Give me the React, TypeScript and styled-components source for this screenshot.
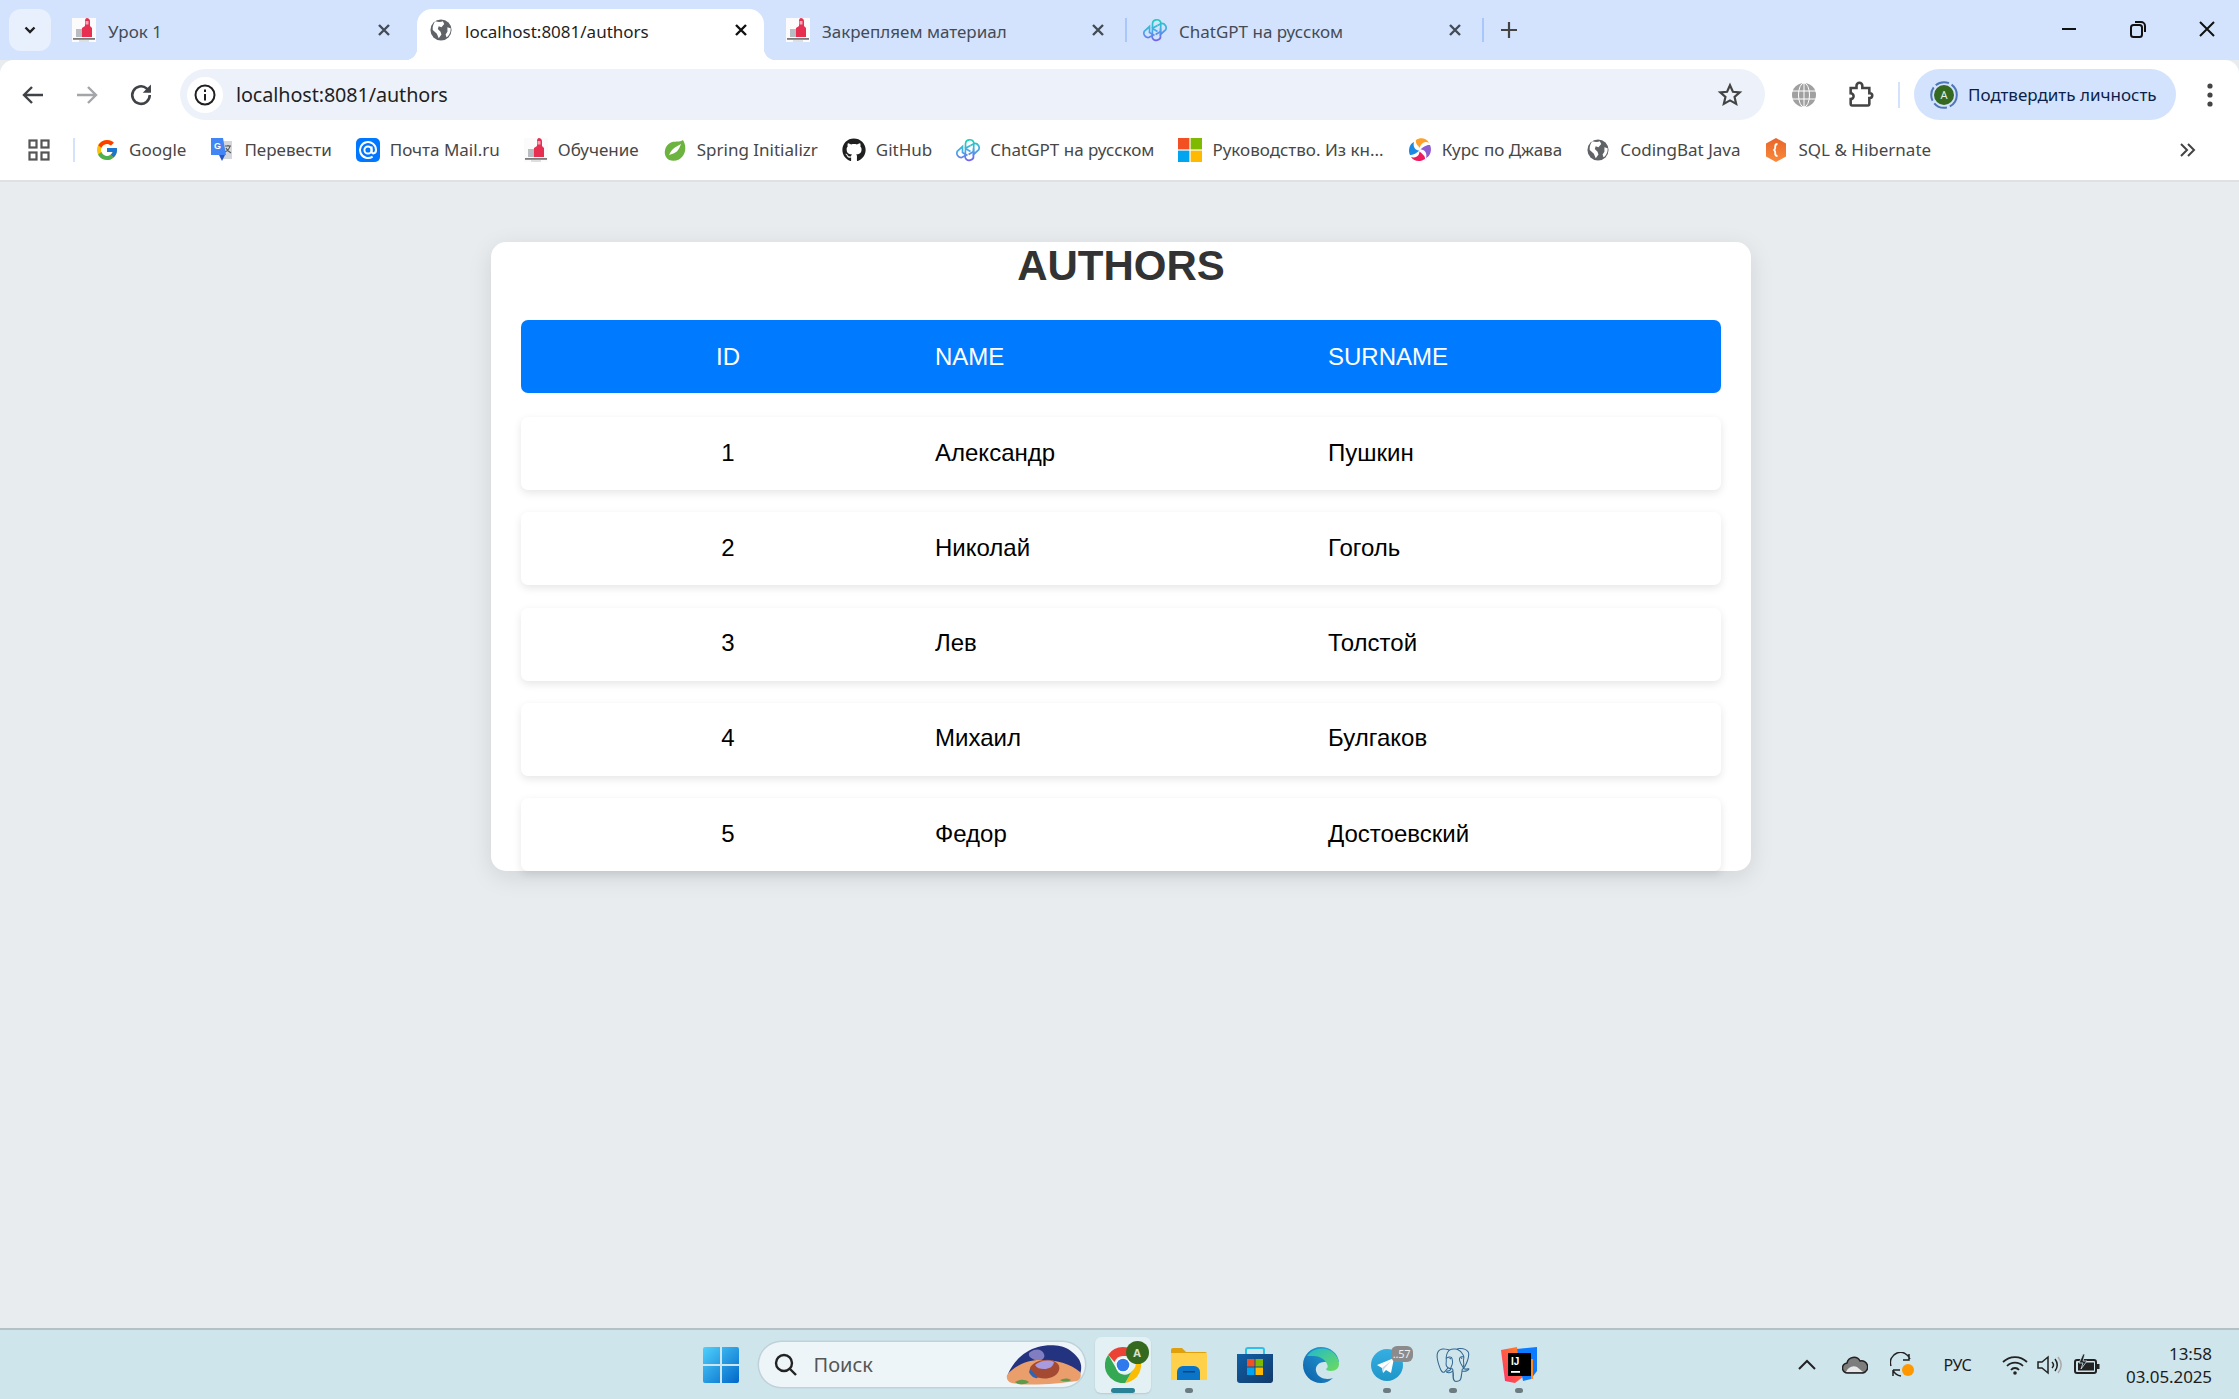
import React from "react";
import styled, { createGlobalStyle, css } from "styled-components";
import { FcGoogle } from "react-icons/fc";
import { FaGithub } from "react-icons/fa";
import { SiPostgresql } from "react-icons/si";

const Global = createGlobalStyle`
  html, body { margin: 0; padding: 0; height: 100%; overflow: hidden; }
  body { font-family: "Noto Sans", "Open Sans", sans-serif; background: #e8ecef; }
  #root { height: 100%; }
`;

const UI = `"Noto Sans", "Open Sans", sans-serif`;
const PAGE = `"Liberation Sans", Arial, sans-serif`;

const Screen = styled.div`
  width: 2239px; height: 1399px; display: flex; flex-direction: column; background: #e8ecef; overflow: hidden;
`;

/* ---------- tab strip ---------- */
const TabStrip = styled.div`
  height: 60px; flex: none; background: #d3e3fd; display: flex; align-items: flex-end; padding-left: 9px;
`;
const TabMenu = styled.div`
  width: 42px; height: 42px; margin: 0 9px 9px 0; border-radius: 12px; background: #e9f0fd;
  display: flex; align-items: center; justify-content: center; color: #1f1f1f; flex: none;
`;
const Tab = styled.div<{ $active?: boolean }>`
  position: relative; width: 347px; height: 51px; margin-right: 10px; flex: none;
  display: flex; align-items: center; padding: 0 11px 9px 12px; box-sizing: border-box; gap: 12px;
  color: ${(p) => (p.$active ? "#1f1f1f" : "#444b55")};
  ${(p) =>
    p.$active &&
    css`
      background: #fff; border-radius: 15px 15px 0 0; padding-left: 13px; gap: 13px;
      &::before, &::after { content: ""; position: absolute; bottom: 0; width: 12px; height: 12px; }
      &::before { left: -12px; background: radial-gradient(circle at 0 0, transparent 12px, #fff 12.5px); }
      &::after { right: -12px; background: radial-gradient(circle at 100% 0, transparent 12px, #fff 12.5px); }
    `}
`;
const TabTitle = styled.span`
  flex: 1; font: 400 17px/24px ${UI}; white-space: nowrap; overflow: hidden; padding-top: 4px;
`;
const TabDivider = styled.i`
  position: absolute; right: -6px; top: 9px; width: 2px; height: 24px; background: #a8c7fa;
`;
const NewTab = styled.div`
  margin: 0 0 12px 9px; height: 36px; display: flex; align-items: center; color: #444;
`;
const WindowButtons = styled.div`
  margin-left: auto; margin-right: -2px; display: flex; align-self: flex-start; height: 60px; align-items: center; padding-bottom: 2px; box-sizing: border-box;
`;
const WinBtn = styled.div`
  width: 69px; display: flex; justify-content: center; color: #111;
`;

/* ---------- toolbar ---------- */
const Toolbar = styled.div`
  height: 60px; flex: none; background: #fff; border-radius: 14px 14px 0 0; display: flex; align-items: center;
  padding-top: 9px; box-sizing: border-box;
`;
const NavButtons = styled.div`
  width: 180px; flex: none; display: flex; padding-left: 13px; box-sizing: border-box;
`;
const NavBtn = styled.div<{ $off?: boolean }>`
  width: 54px; height: 40px; display: flex; align-items: center; justify-content: flex-start;
  color: ${(p) => (p.$off ? "#a3a5a8" : "#3f4246")}; padding-left: 6px; box-sizing: border-box;
`;
const Omnibox = styled.div`
  width: 1585px; height: 51px; flex: none; background: #edf2fa; border-radius: 26px; display: flex; align-items: center;
  padding: 0 22px 0 7px; box-sizing: border-box;
`;
const InfoChip = styled.div`
  width: 36px; height: 36px; border-radius: 50%; background: #fff; display: flex; align-items: center; justify-content: center; flex: none;
`;
const Url = styled.div`
  margin-left: 13px; flex: 1; font: 400 19.8px/24px ${UI}; color: #1f1f1f; letter-spacing: -0.1px;
`;
const ToolIcon = styled.div<{ $w: number }>`
  width: ${(p) => p.$w}px; display: flex; justify-content: center; flex: none; color: #444;
`;
const ToolDivider = styled.i`
  width: 2px; height: 26px; background: #d3e3fd; flex: none; margin-left: 21px;
`;
const ProfilePill = styled.div`
  width: 262px; height: 51px; border-radius: 26px; background: #d3e3fd; flex: none; margin-left: 14px;
  display: flex; align-items: center; padding-left: 16px; box-sizing: border-box; gap: 10px;
  font: 400 17px/24px ${UI}; color: #0b1f4b; white-space: nowrap;
`;
const Avatar = styled.svg`
  flex: none;
`;
const MoreBtn = styled.div`
  width: 63px; flex: none; display: flex; justify-content: center; padding-left: 4px; box-sizing: border-box; color: #444;
`;

/* ---------- bookmarks ---------- */
const BookmarkBar = styled.div`
  height: 62px; flex: none; background: #fff; border-bottom: 2px solid #dfe1e3; box-sizing: border-box;
  display: flex; align-items: center;
`;
const AppsBtn = styled.div`
  width: 73px; flex: none; display: flex; justify-content: center; padding-left: 5px; box-sizing: border-box;
`;
const BookmarkDivider = styled.i`
  width: 2px; height: 24px; background: #d3e3fd; flex: none; margin-right: 20px;
`;
const Bookmark = styled.div`
  display: flex; align-items: center; gap: 10px; margin-right: 24px; flex: none;
  font: 400 17px/24px ${UI}; color: #474747; white-space: nowrap;
`;
const Overflow = styled.div`
  margin-left: auto; margin-right: 42px; color: #444; display: flex;
`;
const BmIcon = styled.span`
  width: 24px; height: 24px; display: flex; align-items: center; justify-content: center; flex: none; font-size: 24px;
`;

/* ---------- page ---------- */
const Main = styled.main`
  flex: 1; min-height: 0; display: flex; justify-content: center; align-items: flex-start; padding: 60px 0 0 3px; box-sizing: border-box;
  background: #e8ecef;
`;
const Card = styled.section`
  width: 1260px; height: 629px; box-sizing: border-box; background: #fff; border-radius: 15px; padding: 0 30px;
  box-shadow: 0 6px 24px rgba(0, 0, 0, 0.1); font-family: ${PAGE};
`;
const Title = styled.h1`
  margin: 0 0 30px; font: 700 42px/48px ${PAGE}; color: #333; text-align: center;
`;
const Cols = css`
  display: grid; grid-template-columns: 414px 393px 393px; align-items: center; font-size: 24px;
`;
const HeaderRow = styled.div`
  ${Cols}; height: 73px; background: #007bff; border-radius: 7px; color: #fff; margin-bottom: 24px;
`;
const Rows = styled.div`
  display: flex; flex-direction: column; gap: 22.25px;
`;
const Row = styled.div`
  ${Cols}; height: 73px; box-sizing: border-box; padding-bottom: 2px; background: #fff; border-radius: 7px; color: #000;
  box-shadow: 0 3px 9px rgba(0, 0, 0, 0.1);
`;
const IdCell = styled.div`
  text-align: center;
`;
const Cell = styled.div``;

/* ---------- taskbar ---------- */
const Taskbar = styled.footer`
  height: 71px; flex: none; box-sizing: border-box; background: #cfe5ec; border-top: 2px solid #b5c0c5;
  display: grid; grid-template-columns: 1fr auto 1fr; align-items: center;
`;
const TaskCenter = styled.div`
  grid-column: 2; display: flex; align-items: center; gap: 10px;
`;
const TaskTile = styled.div<{ $active?: boolean }>`
  position: relative; width: 56px; height: 56px; border-radius: 6px; display: flex; align-items: center; justify-content: center; flex: none;
  ${(p) => p.$active && css`background: #e3f0f4; box-shadow: 0 1px 2px rgba(0,0,0,.12);`}
`;
const Indicator = styled.i<{ $active?: boolean }>`
  position: absolute; bottom: 0; left: 50%; transform: translateX(-50%); height: 5px; border-radius: 3px;
  width: ${(p) => (p.$active ? 24 : 8)}px; background: ${(p) => (p.$active ? "#2a8296" : "#6c7b80")};
`;
const SearchBox = styled.div`
  width: 326px; height: 45px; border-radius: 23px; box-sizing: border-box; background: #eef5f8;
  box-shadow: 0 0 0 1.5px #bfd2d9; display: flex; align-items: center; padding-left: 15px; gap: 16px; flex: none;
  font: 400 20px/24px ${UI}; color: #555;
`;
const SearchArt = styled.div`
  margin-left: auto; margin-right: 3px; display: flex;
`;
const TileBadge = styled.span`
  position: absolute; left: 31px; top: 4px; width: 23px; height: 23px; border-radius: 50%; background: #35691f;
  color: #d6e4cd; font: 700 11px/23px ${UI}; text-align: center;
`;
const CountBadge = styled.span`
  position: absolute; left: 32px; top: 9px; width: 22px; height: 16px; border-radius: 6px; background: #8b8b8b;
  color: #eee; font: 400 11px/16px ${UI}; text-align: center; letter-spacing: -0.3px;
`;
const Tray = styled.div`
  grid-column: 3; justify-self: stretch; display: flex; align-items: center; height: 100%;
  color: #1c1c1c; padding-left: 245px;
`;
const TrayIcon = styled.span<{ $w: number }>`
  width: ${(p) => p.$w}px; flex: none; display: flex; justify-content: center;
`;
const Lang = styled.span`
  width: 30px; flex: none; font: 400 16px/20px ${UI}; letter-spacing: -0.3px; margin: 0 27px 0 -2px; text-align: center;
`;
const Clock = styled.div`
  margin-left: auto; margin-right: 27px; text-align: right; font: 400 17px/23px ${UI}; letter-spacing: -0.1px; color: #1c1c1c;
`;

/* ---------- drawings ---------- */
const Close = ({ c = "#444b55" }: { c?: string }) => (
  <svg width="24" height="24" viewBox="0 0 24 24"><path d="M7 7l10 10M17 7L7 17" stroke={c} strokeWidth="2.4" /></svg>
);
const SchoolIcon = ({ s = 24 }: { s?: number }) => (
  <svg width={s} height={s} viewBox="0 0 24 24">
    <rect width="24" height="24" fill="#fbfbfb" />
    <rect x="4" y="11" width="9" height="8" fill="#b9bcc0" />
    <path d="M10 19V10l3-2V3c0-2 1-3 2-3s3 1 3 3v5l2 2v9z" fill="#e72f52" />
    <path d="M13.500 3h3v3.500h-3z" fill="#f7a6b6" />
    <rect x="1" y="20" width="22" height="1.800" fill="#7a7a7a" />
    <rect x="7" y="22.500" width="10" height="1" fill="#c4c4c4" />
  </svg>
);
const Globe = ({ s = 22, c = "#5f6368" }: { s?: number; c?: string }) => (
  <svg width={s} height={s} viewBox="0 0 24 24">
    <circle cx="12" cy="12" r="11.500" fill={c} />
    <path d="M6 2.500c3 1 6 1 8 0l1.500 3-3 3.500-3-1-1 3 3 3 1 3-3 4-2-5-4.500-4C2.500 8 4 4.500 6 2.500zM19 9l3.500 1c.4 4-1.500 8-4.500 10l-1-3 2-3z" fill="#fff" />
  </svg>
);
const GptIcon = () => (
  <svg width="24" height="25" viewBox="0 0 24 24" fill="none">
    <defs>
      <linearGradient id="gptg" gradientUnits="userSpaceOnUse" x1="10" y1="0" x2="13" y2="24">
        <stop offset="0" stopColor="#14d8b0" />
        <stop offset=".5" stopColor="#4aa8e8" />
        <stop offset="1" stopColor="#7a55ee" />
      </linearGradient>
    </defs>
    <g stroke="url(#gptg)" strokeWidth="1.700">
      <path d="M9.500 9.800V5.500a4.300 4.300 0 018.300-1.500l-.2 9-5 3M9.500 9.800l5-2.800" />
      <path d="M14.500 7l3.800-2a4.300 4.300 0 014.200 6.500L17.500 16v-6" />
      <path d="M17.500 13v4a4.300 4.300 0 01-8.300 2l.3-9 5 3" />
      <path d="M9.500 17l-3.800 2a4.300 4.300 0 01-4.200-6.500L6.500 8v6l5 3" />
    </g>
  </svg>
);
const Chevron = () => (
  <svg width="18" height="18" viewBox="0 0 18 18"><path d="M4.500 6.500L9 11l4.500-4.500" stroke="#1f1f1f" strokeWidth="2.400" fill="none" /></svg>
);
const TranslateIcon = () => (
  <svg width="24" height="26" viewBox="0 0 24 26">
    <path d="M11 4h11v18H13z" fill="#d3d6da" />
    <path d="M15 9h6M18 8v1M20 9c-.7 3-3 5-5 6M16 11c.8 2 3 4 5 5" stroke="#555" strokeWidth="1.100" fill="none" />
    <path d="M1 1h12l3 17H1z" fill="#4285f4" />
    <path d="M9 18l3 6 3-6z" fill="#2a56c6" />
    <text x="4" y="12" fontSize="9" fontWeight="700" fontFamily="Liberation Sans" fill="#fff">G</text>
  </svg>
);
const MailIcon = () => (
  <svg width="24" height="24" viewBox="0 0 24 24">
    <rect width="24" height="24" rx="5" fill="#0077ff" />
    <circle cx="12" cy="12" r="3.600" fill="none" stroke="#fff" strokeWidth="2" />
    <path d="M15.600 8.400v5c0 3 4.400 2.600 4.400-1.400a8 8 0 10-3.400 6.600" fill="none" stroke="#fff" strokeWidth="2" />
  </svg>
);
const SpringIcon = () => (
  <svg width="24" height="24" viewBox="0 0 24 24">
    <path d="M20 2c.5 1 1 2 1.400 3 2.600 7-.6 14-5.400 16.500C11 24 5.500 23 3 19 .5 14.500 2 8 7 5c4-2.400 10-.5 13-3z" fill="#6db33f" />
    <path d="M6 17c3-7 7-8 12-11-2 6-5 9-9 10-1 .3-2 .6-3 1z" fill="#fff" />
  </svg>
);
const MsIcon = () => (
  <svg width="24" height="24" viewBox="0 0 24 24">
    <rect width="11.400" height="11.400" fill="#f25022" />
    <rect x="12.600" width="11.400" height="11.400" fill="#7fba00" />
    <rect y="12.600" width="11.400" height="11.400" fill="#00a4ef" />
    <rect x="12.600" y="12.600" width="11.400" height="11.400" fill="#ffb900" />
  </svg>
);
const CourseIcon = () => (
  <svg width="24" height="24" viewBox="0 0 24 24">
    <path d="M8 2c4-3 11-2 13 3-3-2-6-1-8 2-1 1-1 2-1 3-2-2-5-5-4-8z" fill="#ffa02b" />
    <path d="M22 7c2 4 1 11-4 13 1-3 0-7-3-8-1-.5-1.500-.5-2.500-.5 2-2 6-5 9.500-4.500z" fill="#8e5bd0" />
    <path d="M17 21c-4 3-11 3-14-2 3 1 7 0 8-3l.6-2.500c2 2 6 4.500 5.400 7.500z" fill="#ee1c5f" />
    <path d="M2 17C0 13 1 6 6 4c-1 3 0 7 3 8 .8.400 1.500.5 2.500.5C9 14.500 5.500 17.500 2 17z" fill="#1e88e5" />
  </svg>
);
const SqlIcon = () => (
  <svg width="24" height="24" viewBox="0 0 24 24">
    <defs><linearGradient id="sqlg" x1="0" y1="0" x2="0" y2="1"><stop offset="0" stopColor="#e8652a" /><stop offset="1" stopColor="#f98a3c" /></linearGradient></defs>
    <path d="M12 0l10 5.500v13L12 24 2 18.500v-13z" fill="url(#sqlg)" />
    <path d="M13.500 6c-2 0-2.300 1-2.300 2.500v1.500c0 1-.5 1.700-1.700 2 1.200.3 1.700 1 1.700 2v1.500c0 1.500.3 2.500 2.300 2.500" fill="none" stroke="#fff" strokeWidth="1.800" />
  </svg>
);
const WinLogo = () => (
  <svg width="36" height="36" viewBox="0 0 36 36">
    <defs>
      <linearGradient id="wing" x1="0" y1="0" x2="1" y2="1"><stop offset="0" stopColor="#4fd0fc" /><stop offset="1" stopColor="#0067c9" /></linearGradient>
    </defs>
    <path d="M0 2a2 2 0 012-2h15v17H0zM19 0h15a2 2 0 012 2v15H19zM0 19h17v17H2a2 2 0 01-2-2zM19 19h17v15a2 2 0 01-2 2H19z" fill="url(#wing)" />
  </svg>
);
const SearchArtwork = () => (
  <svg width="76" height="42" viewBox="0 0 76 42">
    <path d="M2 30C8 16 20 6 32 3c10-3 24-2 30 2 6 4 12 9 13 16s-2 13-6 14H6z" fill="#24337f" />
    <path d="M24 8c6-4 12-3 14 2s-4 8-9 6-8-5-5-8z" fill="#8b86c9" opacity=".9" />
    <path d="M1 31c8-10 22-16 36-15 14 0 28 4 37 12 2 4 0 8-3 9-20 3-50 5-65 2-4-1-6-4-5-8z" fill="#ea9e6c" />
    <path d="M24 24c3-8 22-12 28-4 4 5-1 13-9 14-8 2-21-2-19-10z" fill="#a54a32" />
    <path d="M29 21c4-4 13-6 19-3-1 5-5 7-10 7-4 0-7-1-9-4z" fill="#a99be0" />
    <path d="M24 25c3 2 5 6 8 9-4 1-8-3-9-6z" fill="#2f64b5" />
    <path d="M9 38c5-3 10-3 14 0-4 3-10 3-14 0zM54 36c4-2 8-2 11 0-3 2-8 2-11 0z" fill="#5f9a48" />
  </svg>
);
const ChromeIcon = () => (
  <svg width="36" height="36" viewBox="0 0 36 36">
    <path d="M18 0a18 18 0 0115.600 9H18a9 9 0 00-8.500 6L3.200 7.700A18 18 0 0118 0z" fill="#ea4335" />
    <path d="M33.600 9a18 18 0 01-13.500 27L27 24a9 9 0 00-.5-15z" fill="#fbbc04" />
    <path d="M20.100 36A18 18 0 013.200 7.700L11 21a9 9 0 0016 3z" fill="#34a853" />
    <circle cx="18" cy="18" r="7.500" fill="#fff" />
    <circle cx="18" cy="18" r="6.300" fill="#2f7bee" />
  </svg>
);
const FolderIcon = () => (
  <svg width="36" height="35" viewBox="0 0 36 35">
    <path d="M0 3a2 2 0 012-2h9l4 4h19a2 2 0 012 2v3H0z" fill="#e0a00c" />
    <path d="M0 6h36v27H0z" fill="#ffd04a" />
    <path d="M6 25a6 6 0 016-6h11a6 6 0 016 6v8H6z" fill="#0a74c8" />
    <rect x="12" y="24" width="12" height="1.500" fill="#07457e" />
  </svg>
);
const StoreIcon = () => (
  <svg width="36" height="36" viewBox="0 0 36 36">
    <defs><linearGradient id="stg" x1="0" y1="0" x2="1" y2="1"><stop offset="0" stopColor="#0f5fa6" /><stop offset="1" stopColor="#133a6a" /></linearGradient></defs>
    <path d="M9 8V3a2 2 0 012-2h14a2 2 0 012 2v5" fill="none" stroke="#2cc0ec" strokeWidth="2" />
    <path d="M0 7h36v26a3 3 0 01-3 3H3a3 3 0 01-3-3z" fill="url(#stg)" />
    <rect x="10" y="12" width="7.500" height="7.500" fill="#f25022" />
    <rect x="18.500" y="12" width="7.500" height="7.500" fill="#7fba00" />
    <rect x="10" y="20.500" width="7.500" height="7.500" fill="#00a4ef" />
    <rect x="18.500" y="20.500" width="7.500" height="7.500" fill="#ffb900" />
  </svg>
);
const EdgeIcon = () => (
  <svg width="36" height="36" viewBox="0 0 36 36">
    <defs>
      <linearGradient id="edg1" x1="0" y1="1" x2="1" y2="0"><stop offset="0" stopColor="#0a5ea8" /><stop offset="1" stopColor="#2ba8dc" /></linearGradient>
      <linearGradient id="edg2" x1="0" y1="0" x2="1" y2="1"><stop offset="0" stopColor="#1fb8cf" /><stop offset="1" stopColor="#6fdc5a" /></linearGradient>
    </defs>
    <path d="M18 0C8 0 0 8 0 18c0 10 8 18 18 18 5 0 9-2 12-5-6 2-15 1-17-7-1-5 3-9 8-9h15C35 6 27 0 18 0z" fill="url(#edg1)" />
    <path d="M4 9C8 3 16 0 23 2c8 2 13 9 13 15 0 4-3 7-8 7-3 0-5-1-5-2 2-1 2-3 1-5-2-5-8-8-13-8-3 0-6 0-7 0z" fill="url(#edg2)" />
  </svg>
);
const TelegramIcon = () => (
  <svg width="32" height="32" viewBox="0 0 32 32">
    <defs><linearGradient id="tgg" x1="0.5" y1="0" x2="0.5" y2="1"><stop offset="0" stopColor="#37aee2" /><stop offset="1" stopColor="#1e96c8" /></linearGradient></defs>
    <circle cx="16" cy="16" r="16" fill="url(#tgg)" />
    <path d="M6 16l17-7-3 15-5-3-3 3-1-5z" fill="#fff" />
    <path d="M11 19l9-7-7 8-.5 3z" fill="#c8daea" />
  </svg>
);
const IdeaIcon = () => (
  <svg width="36" height="36" viewBox="0 0 36 36">
    <defs>
      <linearGradient id="ijg" x1="0" y1="1" x2="1" y2="0"><stop offset="0" stopColor="#ff2d6b" /><stop offset="1" stopColor="#ff8a1f" /></linearGradient>
    </defs>
    <path d="M0 3l16-3 6 30-8 6-10-2z" fill="url(#ijg)" />
    <path d="M16 2L36 0v24l-6 8-8 2z" fill="#0d7bff" />
    <rect x="30" y="12" width="2" height="20" fill="#ff8a1f" />
    <rect x="7" y="6" width="23" height="23" fill="#000" />
    <text x="10" y="18" fontFamily="Liberation Sans" fontSize="10" fontWeight="700" fill="#fff">IJ</text>
    <rect x="10" y="24" width="9" height="1.800" fill="#fff" />
  </svg>
);

/* ---------- data ---------- */
const authors = [
  [1, "Александр", "Пушкин"],
  [2, "Николай", "Гоголь"],
  [3, "Лев", "Толстой"],
  [4, "Михаил", "Булгаков"],
  [5, "Федор", "Достоевский"],
] as const;

const bookmarks: [React.ReactNode, string][] = [
  [<FcGoogle />, "Google"],
  [<TranslateIcon />, "Перевести"],
  [<MailIcon />, "Почта Mail.ru"],
  [<SchoolIcon />, "Обучение"],
  [<SpringIcon />, "Spring Initializr"],
  [<FaGithub color="#1f1f1f" />, "GitHub"],
  [<GptIcon />, "ChatGPT на русском"],
  [<MsIcon />, "Руководство. Из кн..."],
  [<CourseIcon />, "Курс по Джава"],
  [<Globe />, "CodingBat Java"],
  [<SqlIcon />, "SQL & Hibernate"],
];

export default function App() {
  return (
    <Screen>
      <Global />
      <TabStrip>
        <TabMenu><Chevron /></TabMenu>
        <Tab><SchoolIcon /><TabTitle>Урок 1</TabTitle><Close /></Tab>
        <Tab $active><Globe /><TabTitle>localhost:8081/authors</TabTitle><Close c="#111" /></Tab>
        <Tab><SchoolIcon /><TabTitle>Закрепляем материал</TabTitle><Close /><TabDivider /></Tab>
        <Tab><GptIcon /><TabTitle>ChatGPT на русском</TabTitle><Close /><TabDivider /></Tab>
        <NewTab>
          <svg width="24" height="24" viewBox="0 0 24 24"><path d="M12 4v16M4 12h16" stroke="#444" strokeWidth="2.200" /></svg>
        </NewTab>
        <WindowButtons>
          <WinBtn><svg width="18" height="18" viewBox="0 0 18 18"><path d="M2 9h14" stroke="#111" strokeWidth="2" /></svg></WinBtn>
          <WinBtn>
            <svg width="18" height="18" viewBox="0 0 18 18" fill="none" stroke="#111" strokeWidth="2"><rect x="2" y="5" width="11" height="12" rx="2.500" /><path d="M6 2h6a4 4 0 014 4v6" /></svg>
          </WinBtn>
          <WinBtn><svg width="20" height="20" viewBox="0 0 20 20"><path d="M3 3l14 14M17 3L3 17" stroke="#111" strokeWidth="2" /></svg></WinBtn>
        </WindowButtons>
      </TabStrip>

      <Toolbar>
        <NavButtons>
          <NavBtn><svg width="28" height="28" viewBox="0 0 28 28"><path d="M24 14H6M13 6l-8 8 8 8" stroke="currentColor" strokeWidth="2.400" fill="none" /></svg></NavBtn>
          <NavBtn $off><svg width="28" height="28" viewBox="0 0 28 28"><path d="M4 14h18M15 6l8 8-8 8" stroke="currentColor" strokeWidth="2.400" fill="none" /></svg></NavBtn>
          <NavBtn><svg width="28" height="28" viewBox="0 0 24 24"><path d="M19.500 12a7.500 7.500 0 11-2.500-5.500L19.500 9" stroke="currentColor" strokeWidth="2.200" fill="none" /><path d="M20.500 3v7h-7z" fill="currentColor" /></svg></NavBtn>
        </NavButtons>
        <Omnibox>
          <InfoChip>
            <svg width="24" height="24" viewBox="0 0 24 24" fill="none" stroke="#1f1f1f" strokeWidth="2"><circle cx="12" cy="12" r="9.500" /><path d="M12 11v6.500M12 6.500v2.500" /></svg>
          </InfoChip>
          <Url>localhost:8081/authors</Url>
          <svg width="26" height="26" viewBox="0 0 24 24" fill="none" stroke="#444" strokeWidth="2"><path d="M12 3l2.700 6 6.300.6-4.800 4.200 1.500 6.400L12 17l-5.700 3.200 1.500-6.400L3 9.600 9.300 9z" /></svg>
        </Omnibox>
        <ToolIcon $w={78}>
          <svg width="24" height="26" viewBox="0 0 24 24" fill="none" stroke="#fff" strokeWidth="1"><circle cx="12" cy="12" r="12" fill="#a0a0a0" stroke="none" /><ellipse cx="12" cy="12" rx="5.500" ry="12" /><path d="M0 8h24M0 16h24M12 0v24" /></svg>
        </ToolIcon>
        <ToolIcon $w={34}>
          <svg width="28" height="28" viewBox="0 0 24 24" fill="none" stroke="#444" strokeWidth="2.200"><path d="M4 6h5V4a2.500 2.500 0 015 0v2h6v4.500h.500a2 2 0 010 4H20V20a1 1 0 01-1 1H5a1 1 0 01-1-1v-4.500a2.500 2.500 0 000-5z" /></svg>
        </ToolIcon>
        <ToolDivider />
        <ProfilePill>
          <Avatar width="28" height="28" viewBox="0 0 28 28">
            <circle cx="14" cy="14" r="12.800" fill="none" stroke="#4f76b8" strokeWidth="2" strokeDasharray="14 3" />
            <circle cx="14" cy="14" r="10" fill="#34691f" />
            <text x="14" y="18" textAnchor="middle" fontSize="11" fill="#e6efe0" fontFamily="Noto Sans">A</text>
          </Avatar>
          Подтвердить личность
        </ProfilePill>
        <MoreBtn>
          <svg width="8" height="26" viewBox="0 0 8 26" fill="#444"><circle cx="4" cy="4" r="2.600" /><circle cx="4" cy="13" r="2.600" /><circle cx="4" cy="22" r="2.600" /></svg>
        </MoreBtn>
      </Toolbar>

      <BookmarkBar>
        <AppsBtn>
          <svg width="22" height="22" viewBox="0 0 22 22" fill="none" stroke="#555" strokeWidth="2.200"><rect x="1.500" y="1.500" width="7" height="7" /><rect x="13.500" y="1.500" width="7" height="7" /><rect x="1.500" y="13.500" width="7" height="7" /><rect x="13.500" y="13.500" width="7" height="7" /></svg>
        </AppsBtn>
        <BookmarkDivider />
        {bookmarks.map(([icon, label]) => (
          <Bookmark key={label}><BmIcon>{icon}</BmIcon>{label}</Bookmark>
        ))}
        <Overflow>
          <svg width="20" height="20" viewBox="0 0 20 20" fill="none" stroke="#444" strokeWidth="2"><path d="M4 4l6 6-6 6M11 4l6 6-6 6" /></svg>
        </Overflow>
      </BookmarkBar>

      <Main>
        <Card>
          <Title>AUTHORS</Title>
          <HeaderRow>
            <IdCell>ID</IdCell>
            <Cell>NAME</Cell>
            <Cell>SURNAME</Cell>
          </HeaderRow>
          <Rows>
            {authors.map(([id, name, surname]) => (
              <Row key={id}>
                <IdCell>{id}</IdCell>
                <Cell>{name}</Cell>
                <Cell>{surname}</Cell>
              </Row>
            ))}
          </Rows>
        </Card>
      </Main>

      <Taskbar>
        <TaskCenter>
          <TaskTile><WinLogo /></TaskTile>
          <SearchBox>
            <svg width="24" height="24" viewBox="0 0 24 24" fill="none" stroke="#222" strokeWidth="2.400"><circle cx="10" cy="10" r="8" /><path d="M16 16l6 6" /></svg>
            Поиск
            <SearchArt><SearchArtwork /></SearchArt>
          </SearchBox>
          <TaskTile $active><ChromeIcon /><TileBadge>A</TileBadge><Indicator $active /></TaskTile>
          <TaskTile><FolderIcon /><Indicator /></TaskTile>
          <TaskTile><StoreIcon /></TaskTile>
          <TaskTile><EdgeIcon /></TaskTile>
          <TaskTile><TelegramIcon /><CountBadge>..57</CountBadge><Indicator /></TaskTile>
          <TaskTile><SiPostgresql size={34} color="#336791" /><Indicator /></TaskTile>
          <TaskTile><IdeaIcon /><Indicator /></TaskTile>
        </TaskCenter>
        <Tray>
          <TrayIcon $w={30}><svg width="20" height="12" viewBox="0 0 20 12" fill="none" stroke="#222" strokeWidth="2"><path d="M2 10l8-8 8 8" /></svg></TrayIcon>
          <TrayIcon $w={66}>
            <svg width="26" height="18" viewBox="0 0 26 18"><path d="M6 17a5 5 0 01-1-10 7 7 0 0113-2 6 6 0 013 12z" fill="#7d7d7d" stroke="#222" strokeWidth="1.500" /><path d="M4 16c2-5 7-7 11-5l6 5z" fill="#e8e8e8" /></svg>
          </TrayIcon>
          <TrayIcon $w={30}>
            <svg width="26" height="26" viewBox="0 0 26 26" fill="none" stroke="#222" strokeWidth="1.500"><path d="M1 14a10 10 0 0119-7M19 2v6h-6M3 18h7M3 18v6M3 18a10 10 0 008 6" /><circle cx="18" cy="18" r="6" fill="#ff9800" stroke="none" /></svg>
          </TrayIcon>
          <TrayIcon $w={27} />
          <Lang>РУС</Lang>
          <TrayIcon $w={30}>
            <svg width="26" height="20" viewBox="0 0 26 20" fill="none" stroke="#222" strokeWidth="1.800"><path d="M1 7a17 17 0 0124 0M5 11a11 11 0 0116 0M9 15a5 5 0 018 0" /><circle cx="13" cy="18" r="1.800" fill="#222" stroke="none" /></svg>
          </TrayIcon>
          <TrayIcon $w={40}>
            <svg width="26" height="22" viewBox="0 0 26 22" fill="none" stroke="#222" strokeWidth="1.500"><path d="M1 8h4l6-5v16l-6-5H1zM15 8c2 2 2 4 0 6M18 5c3 4 3 8 0 12" /><path d="M21 3c4 5 4 11 0 16" stroke="#aaa" /></svg>
          </TrayIcon>
          <TrayIcon $w={34}>
            <svg width="26" height="22" viewBox="0 0 26 22"><rect x="1" y="6" width="21" height="13" rx="2" fill="none" stroke="#222" strokeWidth="2" /><rect x="4" y="8.500" width="16" height="8" fill="#222" /><rect x="23" y="10" width="2.500" height="5" fill="#222" /><path d="M9 0L5 9h4l-2 6 6-8H9l2-7z" fill="#222" stroke="#cfe5ec" strokeWidth=".8" /></svg>
          </TrayIcon>
          <Clock>13:58<br />03.05.2025</Clock>
        </Tray>
      </Taskbar>
    </Screen>
  );
}
